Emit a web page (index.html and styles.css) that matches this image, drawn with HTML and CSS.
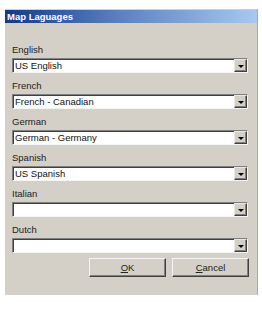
FILE: index.html
```html
<!DOCTYPE html>
<html>
<head>
<meta charset="utf-8">
<link rel="stylesheet" href="styles.css">
</head>
<body>
<div class="dialog">
  <div class="titlebar">Map Laguages</div>
  <div class="content">
    <div class="field">
      <div class="label">English</div>
      <div class="combo"><span class="value">US English</span><span class="drop"><span class="arrow"></span></span></div>
    </div>
    <div class="field">
      <div class="label">French</div>
      <div class="combo"><span class="value">French - Canadian</span><span class="drop"><span class="arrow"></span></span></div>
    </div>
    <div class="field">
      <div class="label">German</div>
      <div class="combo"><span class="value">German - Germany</span><span class="drop"><span class="arrow"></span></span></div>
    </div>
    <div class="field">
      <div class="label">Spanish</div>
      <div class="combo"><span class="value">US Spanish</span><span class="drop"><span class="arrow"></span></span></div>
    </div>
    <div class="field">
      <div class="label">Italian</div>
      <div class="combo"><span class="value"></span><span class="drop"><span class="arrow"></span></span></div>
    </div>
    <div class="field">
      <div class="label">Dutch</div>
      <div class="combo"><span class="value"></span><span class="drop"><span class="arrow"></span></span></div>
    </div>
    <div class="buttons">
      <div class="btn"><u>O</u>K</div>
      <div class="btn"><u>C</u>ancel</div>
    </div>
  </div>
</div>
</body>
</html>
```
FILE: styles.css
```css
html, body {
  margin: 0;
  padding: 0;
  background: #ffffff;
}
body {
  font-family: "Liberation Sans", Arial, sans-serif;
  font-size: 9.5px;
  color: #111;
}
.dialog {
  margin: 9px 0 0 5px;
  width: 253px;
  height: 286px;
  box-sizing: border-box;
  background: #d4d0c8;
  border-right: 1px solid #a9a9a9;
  padding-top: 1px;
}
.titlebar {
  height: 13px;
  line-height: 13px;
  padding-left: 2px;
  color: #fff;
  font-weight: bold;
  font-size: 9.5px;
  background: linear-gradient(to right, #123a88 0%, #5b80c0 45%, #a7c9ef 100%);
}
.content {
  padding: 14px 8px 0 7px;
}
.field {
  display: flex;
  flex-direction: column;
}
.label {
  height: 21px;
  box-sizing: border-box;
  padding-top: 7px;
  line-height: 12px;
  color: #222;
}
.combo {
  height: 15px;
  margin-right: 1px;
  box-sizing: border-box;
  display: flex;
  background: #fff;
  border-top: 1px solid #808080;
  border-left: 1px solid #808080;
  border-right: 1px solid #f4f4f4;
  border-bottom: 1px solid #f4f4f4;
  box-shadow: inset 1px 1px 0 #404040;
}
.value {
  flex: 1;
  padding-left: 2px;
  padding-top: 1px;
  line-height: 12px;
}
.drop {
  width: 13px;
  box-sizing: border-box;
  background: #d4d0c8;
  border-top: 1px solid #e8e8e8;
  border-left: 1px solid #e8e8e8;
  border-right: 1px solid #404040;
  border-bottom: 1px solid #404040;
  box-shadow: inset -1px -1px 0 #808080;
  display: flex;
  align-items: center;
  justify-content: center;
}
.arrow {
  width: 0;
  height: 0;
  border-left: 3px solid transparent;
  border-right: 3px solid transparent;
  border-top: 3px solid #000;
  margin-top: 1px;
}
.buttons {
  display: flex;
  justify-content: flex-end;
  gap: 6px;
  margin-top: 5px;
}
.btn {
  width: 77px;
  height: 19px;
  box-sizing: border-box;
  border-top: 1px solid #f4f4f4;
  border-left: 1px solid #f4f4f4;
  border-right: 1px solid #404040;
  border-bottom: 1px solid #404040;
  box-shadow: inset -1px -1px 0 #808080;
  display: flex;
  align-items: center;
  justify-content: center;
  color: #222;
}
.btn u {
  text-decoration: underline;
}
```
